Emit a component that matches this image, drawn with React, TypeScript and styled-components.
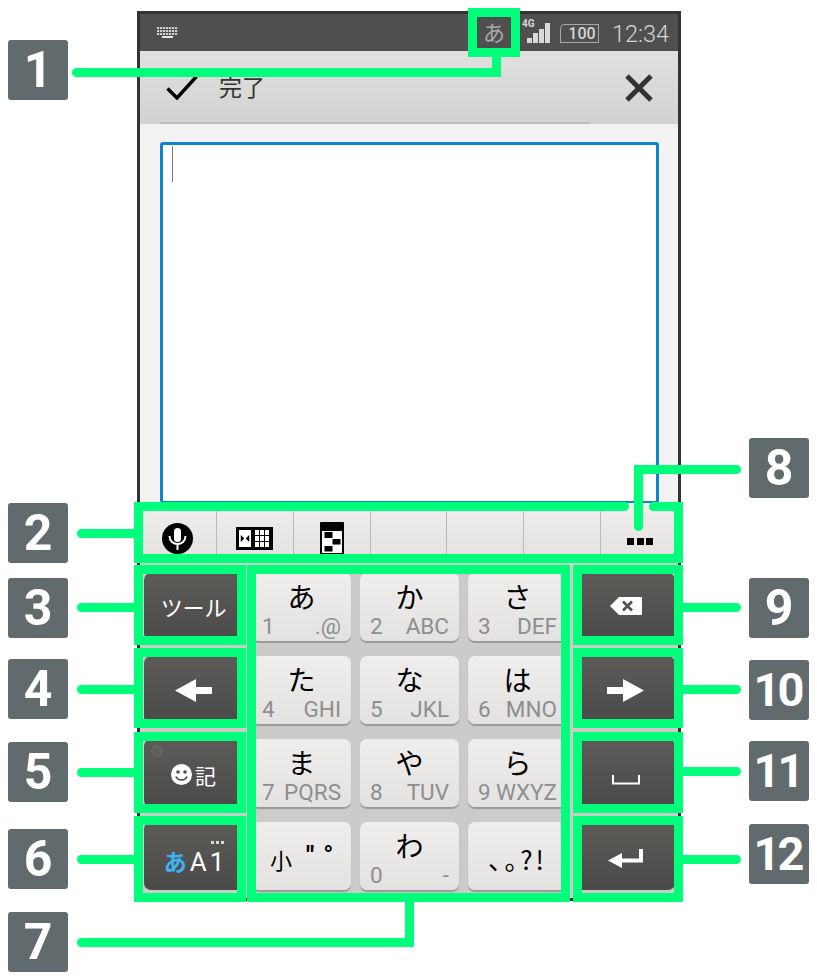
import React from "react";
import styled, { createGlobalStyle } from "styled-components";

const Global = createGlobalStyle`
  html, body { margin: 0; padding: 0; background: #fff; }
  body { font-family: "Roboto", "Noto Sans CJK JP", sans-serif; overflow: hidden; }
`;

const GREEN = "#00ff7b";
const JP = `"Noto Sans CJK JP", "Noto Sans", sans-serif`;

const Page = styled.div`
  position: relative;
  width: 817px;
  height: 980px;
  padding: 11px 0 0 137px;
  box-sizing: border-box;
  background: #fff;
`;
const Phone = styled.div`
  width: 544px;
  height: 890px;
  box-sizing: border-box;
  border: 3px solid #333;
  display: flex;
  flex-direction: column;
  background: #f2f2f2;
`;
const StatusBar = styled.div`
  height: 37px;
  flex: none;
  background: #4f4f4f;
  display: flex;
  align-items: center;
  color: #cfcfcf;
  padding: 0 9px 0 17px;
`;
const ImeGlyph = styled.span`
  margin-left: auto;
  font: 400 22px/37px ${JP};
  color: #a9a9a9;
  margin-right: 16px;
  margin-top: -3px;
`;
const Signal = styled.div`
  position: relative;
  width: 29px;
  height: 37px;
  margin-right: 16px;
  display: flex;
  align-items: flex-end;
`;
const FourG = styled.span`
  position: absolute;
  left: 1px;
  top: 4px;
  font: 700 10px/12px "Roboto", sans-serif;
  color: #d8d8d8;
`;
const Battery = styled.div`
  position: relative;
  width: 33px;
  height: 19px;
  border: 1px solid #a8a8a8;
  border-left: 0;
  box-sizing: border-box;
  font: 500 16px/17px "Roboto", sans-serif;
  color: #d5d5d5;
  text-align: center;
  margin-right: 13px;
  margin-top: 2px;
  &::before {
    content: "";
    position: absolute;
    left: -6px;
    top: -1px;
    width: 7px;
    height: 19px;
    border: 1px solid #a8a8a8;
    border-right: 0;
    border-top-left-radius: 5px;
    box-sizing: border-box;
  }
`;
const Time = styled.span`
  font: 300 23.5px/37px "Roboto", sans-serif;
  color: #d6d6d6;
  margin-top: 3px;
`;
const Header = styled.div`
  position: relative;
  height: 73px;
  flex: none;
  box-sizing: border-box;
  background: linear-gradient(#e1e0de, #d2d2d0);
  display: flex;
  align-items: center;
  padding: 0 25px 0 26px;
  &::after {
    content: "";
    position: absolute;
    left: 20px;
    width: 430px;
    bottom: 0;
    height: 2px;
    background: #bdbdbb;
  }
`;
const HeaderLabel = styled.span`
  margin-left: 21px;
  font: 400 23px/30px ${JP};
  color: #333;
  margin-top: -3px;
`;
const CloseIcon = styled.svg`
  margin-left: auto;
`;
const Content = styled.div`
  flex: 1;
  min-height: 0;
  padding: 18px 19px 0 20px;
  display: flex;
`;
const TextArea = styled.div`
  flex: 1;
  background: #fff;
  border: 3px solid #0c86c7;
  border-bottom-width: 2px;
  border-radius: 3px;
`;
const Caret = styled.div`
  width: 1px;
  height: 36px;
  background: #777;
  margin: 1px 0 0 9px;
`;
const CandidateBar = styled.div`
  height: 55px;
  flex: none;
  display: grid;
  grid-template-columns: repeat(7, 1fr);
  background: linear-gradient(#f0efee, #e3e2e1);
`;
const CandidateCell = styled.div`
  border-right: 1px solid #b9b9b7;
  display: flex;
  align-items: center;
  justify-content: center;
  padding-top: 16px;
  box-sizing: border-box;
  &:last-child { border-right: 0; }
`;
const Dots = styled.div`
  display: flex;
  gap: 2.5px;
  margin-left: 1px;
  margin-top: 5px;
`;
const Dot = styled.i`
  width: 7px;
  height: 7px;
  background: #000;
`;
const Keyboard = styled.div`
  flex: none;
  height: 340px;
  background: #cbcbca;
  display: grid;
  grid-template-columns: repeat(5, 99px);
  grid-auto-rows: 68px;
  column-gap: 9px;
  row-gap: 15px;
  padding: 15px 0 0 4px;
  box-sizing: border-box;
`;
const Key = styled.div`
  position: relative;
  border-radius: 7px;
  background: linear-gradient(#efeeed, #e3e2e1);
  box-shadow: 0 2px 1px #9a9a99;
  padding: 7px 10px 0;
  box-sizing: border-box;
  display: flex;
  flex-direction: column;
  color: #000;
`;
const Kana = styled.div`
  font: 400 28px/32px ${JP};
  text-align: center;
`;
const SubRow = styled.div`
  display: flex;
  justify-content: space-between;
  font: 400 22.5px/24px "Roboto", sans-serif;
  color: #8e8e8e;
  margin-top: 2px;
`;
const SmallKana = styled.div`
  display: flex;
  align-items: center;
  height: 60px;
  padding-left: 8px;
  font: 400 22px/24px ${JP};
  gap: 14px;
`;
const Marks = styled.span`
  font: 700 26px/24px "Roboto", sans-serif;
  letter-spacing: 9px;
  margin-top: -8px;
`;
const Punct = styled.div`
  height: 60px;
  display: flex;
  align-items: center;
  justify-content: center;
  font: 400 26px/30px ${JP};
  font-feature-settings: "palt";
  letter-spacing: 3px;
`;
const SideKey = styled.div`
  position: relative;
  border-radius: 7px;
  background: linear-gradient(#5d5b58, #4a4a49);
  color: #fff;
  display: flex;
  align-items: center;
  justify-content: center;
  padding-top: 1px;
  box-sizing: border-box;
`;
const ToolLabel = styled.span`
  font: 400 22px/28px ${JP};
  letter-spacing: -0.2px;
  margin-top: -3px;
`;
const Lamp = styled.i`
  position: absolute;
  left: 7px;
  top: 6px;
  width: 12px;
  height: 12px;
  border-radius: 50%;
  background: #5f5f5e;
  border: 1px solid #6b6b6a;
  box-sizing: border-box;
`;
const EmojiRow = styled.div`
  display: flex;
  align-items: center;
  gap: 3px;
  font: 400 21px/24px ${JP};
  margin-top: 2px;
`;
const ModeRow = styled.div`
  position: relative;
  display: flex;
  align-items: baseline;
  margin-top: 10px;
  margin-left: 4px;
`;
const ModeKana = styled.span`
  font: 700 23px/26px ${JP};
  color: #3db5f2;
`;
const ModeLatin = styled.span`
  font: 400 26px/26px "Roboto", sans-serif;
  letter-spacing: 3px;
  margin-left: 3px;
`;
const ModeDots = styled.div`
  position: absolute;
  right: 3px;
  top: -7px;
  display: flex;
  gap: 2px;
`;
const ModeDot = styled.i`
  width: 3px;
  height: 3px;
  background: #d8d8d8;
`;

const Badge = styled.div<{ $x: number; $y: number }>`
  position: absolute;
  left: ${(p) => p.$x}px;
  top: ${(p) => p.$y}px;
  width: 60px;
  height: 60px;
  background: #616a6c;
  border-radius: 3px;
  color: #fff;
  display: flex;
  align-items: center;
  justify-content: center;
  font: 700 50px/60px "Roboto", sans-serif;
`;
const WideBadge = styled(Badge)`
  font-size: 47px;
  letter-spacing: -3px;
  padding-right: 3px;
  box-sizing: border-box;
`;
const Stroke = styled.div<{ $x: number; $y: number; $w: number; $h: number; $r?: string }>`
  position: absolute;
  left: ${(p) => p.$x}px;
  top: ${(p) => p.$y}px;
  width: ${(p) => p.$w}px;
  height: ${(p) => p.$h}px;
  background: ${GREEN};
  border-radius: ${(p) => p.$r || "0"};
`;
const Frame = styled.div<{ $x: number; $y: number; $w: number; $h: number; $noTop?: boolean }>`
  position: absolute;
  left: ${(p) => p.$x}px;
  top: ${(p) => p.$y}px;
  width: ${(p) => p.$w}px;
  height: ${(p) => p.$h}px;
  box-sizing: border-box;
  border: 9px solid ${GREEN};
  ${(p) => (p.$noTop ? "border-top: 0;" : "")}
`;

const keys: { k: string; n: string; l: string }[][] = [
  [
    { k: "あ", n: "1", l: ".@" },
    { k: "か", n: "2", l: "ABC" },
    { k: "さ", n: "3", l: "DEF" },
  ],
  [
    { k: "た", n: "4", l: "GHI" },
    { k: "な", n: "5", l: "JKL" },
    { k: "は", n: "6", l: "MNO" },
  ],
  [
    { k: "ま", n: "7", l: "PQRS" },
    { k: "や", n: "8", l: "TUV" },
    { k: "ら", n: "9", l: "WXYZ" },
  ],
];

const KanaKey = ({ k, n, l }: { k: string; n: string; l: string }) => (
  <Key>
    <Kana>{k}</Kana>
    <SubRow>
      <span>{n}</span>
      <span>{l}</span>
    </SubRow>
  </Key>
);

const KeyboardGlyph = () => (
  <svg width="21" height="11" viewBox="0 0 21 11" fill="#cfcfcf">
    {[0, 3, 6, 9, 12, 15, 18].map((x) => (
      <g key={x}>
        <rect x={x} y="0" width="2.2" height="2" />
        <rect x={x} y="3" width="2.2" height="2" />
        <rect x={x} y="6" width="2.2" height="2" />
      </g>
    ))}
    <rect x="5" y="9" width="11" height="2" fill="#e8e8e8" />
  </svg>
);

const SignalBars = () => (
  <svg width="23" height="20" viewBox="0 0 23 20" fill="#dadada" style={{ marginLeft: 6, marginBottom: 8 }}>
    <rect x="0" y="15" width="5" height="5" />
    <rect x="6" y="10" width="5" height="10" />
    <rect x="12" y="6" width="5" height="14" />
    <rect x="18" y="0" width="5" height="20" />
  </svg>
);

const MicIcon = () => (
  <svg width="31" height="31" viewBox="0 0 31 31">
    <circle cx="15.5" cy="15.5" r="15.5" fill="#000" />
    <rect x="12" y="5" width="7" height="14" rx="3.5" fill="#fff" />
    <path d="M7.500 13c0 10.500 16 10.500 16 0" fill="none" stroke="#fff" strokeWidth="2" />
    <rect x="14.500" y="21" width="2" height="6" fill="#fff" />
  </svg>
);

const KeypadIcon = () => (
  <svg width="37" height="23" viewBox="0 0 37 23">
    <rect x="0" y="0" width="37" height="23" fill="#000" />
    <rect x="3" y="3" width="12" height="17" fill="#fff" />
    <path d="M8.300 11.500l-3.500-3.500v7zM9.700 11.500l3.500-3.500v7z" fill="#000" />
    {[19, 24, 29].map((x) => (
      <React.Fragment key={x}>
        <rect x={x} y="3" width="4" height="5" fill="#fff" />
        <rect x={x} y="9" width="4" height="5" fill="#fff" />
        <rect x={x} y="15" width="4" height="5" fill="#fff" />
      </React.Fragment>
    ))}
  </svg>
);

const LayoutIcon = () => (
  <svg width="24" height="33" viewBox="0 0 24 33">
    <rect x="0" y="0" width="24" height="33" rx="1" fill="#000" />
    <rect x="2" y="9" width="20" height="22" fill="#fff" />
    <rect x="4.500" y="10" width="8" height="6" fill="#000" />
    <rect x="12.500" y="17" width="8" height="5.500" fill="#000" />
    <rect x="4.500" y="24" width="8" height="5.500" fill="#000" />
  </svg>
);

const LeftArrow = () => (
  <svg width="37" height="23" viewBox="0 0 37 23" fill="#fff">
    <path d="M0 11.5L21 0v8h16v7H21v8z" />
  </svg>
);
const RightArrow = () => (
  <svg width="37" height="23" viewBox="0 0 37 23" fill="#fff">
    <path d="M37 11.5L16 0v8H0v7h16v8z" />
  </svg>
);
const BackspaceIcon = () => (
  <svg width="32" height="18" viewBox="0 0 32 18" style={{ marginTop: -3 }}>
    <path d="M0 9L9 0h23v18H9z" fill="#fff" />
    <path d="M13 4.5l9 9M22 4.5l-9 9" stroke="#4f4f4e" strokeWidth="2.6" />
  </svg>
);
const SpaceIcon = () => (
  <svg width="28" height="10" viewBox="0 0 28 10" fill="none" style={{ marginTop: 13 }}>
    <path d="M1 0v8.500h26V0" stroke="#fff" strokeWidth="2" />
  </svg>
);
const EnterIcon = () => (
  <svg width="35" height="19" viewBox="0 0 35 19" fill="#fff" style={{ marginTop: 4 }}>
    <path d="M0 11.500L14 4v5.500h17V0h4v13.500H14V19z" />
  </svg>
);
const Smiley = () => (
  <svg width="21" height="21" viewBox="0 0 21 21">
    <circle cx="10.500" cy="10.500" r="10.500" fill="#fff" />
    <circle cx="7" cy="8" r="1.800" fill="#4f4f4e" />
    <circle cx="14" cy="8" r="1.800" fill="#4f4f4e" />
    <path d="M5 12.500c2 4.500 9 4.500 11 0" fill="none" stroke="#4f4f4e" strokeWidth="1.800" />
  </svg>
);

export default function App() {
  return (
    <Page>
      <Global />
      <Phone>
        <StatusBar>
          <KeyboardGlyph />
          <ImeGlyph>あ</ImeGlyph>
          <Signal>
            <FourG>4G</FourG>
            <SignalBars />
          </Signal>
          <Battery>100</Battery>
          <Time>12:34</Time>
        </StatusBar>
        <Header>
          <svg width="32" height="25" viewBox="0 0 32 25" fill="none">
            <path d="M1.500 13.500L11 23 30.500 1.500" stroke="#000" strokeWidth="3.400" />
          </svg>
          <HeaderLabel>完了</HeaderLabel>
          <CloseIcon width="28" height="28" viewBox="0 0 28 28" fill="none">
            <path d="M2 2l24 24M26 2L2 26" stroke="#333" strokeWidth="5" />
          </CloseIcon>
        </Header>
        <Content>
          <TextArea>
            <Caret />
          </TextArea>
        </Content>
        <CandidateBar>
          <CandidateCell><MicIcon /></CandidateCell>
          <CandidateCell><KeypadIcon /></CandidateCell>
          <CandidateCell><LayoutIcon /></CandidateCell>
          <CandidateCell />
          <CandidateCell />
          <CandidateCell />
          <CandidateCell>
            <Dots><Dot /><Dot /><Dot /></Dots>
          </CandidateCell>
        </CandidateBar>
        <Keyboard>
          <SideKey><ToolLabel>ツール</ToolLabel></SideKey>
          {keys[0].map((k) => <KanaKey key={k.k} {...k} />)}
          <SideKey><BackspaceIcon /></SideKey>

          <SideKey><LeftArrow /></SideKey>
          {keys[1].map((k) => <KanaKey key={k.k} {...k} />)}
          <SideKey><RightArrow /></SideKey>

          <SideKey>
            <Lamp />
            <EmojiRow><Smiley />記</EmojiRow>
          </SideKey>
          {keys[2].map((k) => <KanaKey key={k.k} {...k} />)}
          <SideKey><SpaceIcon /></SideKey>

          <SideKey>
            <ModeRow>
              <ModeDots><ModeDot /><ModeDot /><ModeDot /></ModeDots>
              <ModeKana>あ</ModeKana>
              <ModeLatin>A1</ModeLatin>
            </ModeRow>
          </SideKey>
          <Key>
            <SmallKana>
              <span>小</span>
              <Marks>"°</Marks>
            </SmallKana>
          </Key>
          <Key>
            <Kana>わ</Kana>
            <SubRow>
              <span>0</span>
              <span>-</span>
            </SubRow>
          </Key>
          <Key>
            <Punct>、。?!</Punct>
          </Key>
          <SideKey><EnterIcon /></SideKey>
        </Keyboard>
      </Phone>

      {/* 1 */}
      <Frame $x={468} $y={8} $w={52} $h={49} />
      <Stroke $x={492} $y={57} $w={9} $h={20} />
      <Stroke $x={72} $y={68} $w={429} $h={9} $r="5px 0 0 5px" />
      {/* 2 + 8 */}
      <Frame $x={134} $y={511} $w={549} $h={52} $noTop />
      <Stroke $x={134} $y={502} $w={495} $h={9} $r="0 5px 5px 0" />
      <Stroke $x={649} $y={502} $w={34} $h={9} $r="5px 0 0 5px" />
      <Stroke $x={77} $y={529} $w={57} $h={9} $r="5px 0 0 5px" />
      <Stroke $x={634} $y={465} $w={9} $h={66} $r="0 0 5px 5px" />
      <Stroke $x={634} $y={465} $w={107} $h={9} $r="0 5px 5px 0" />
      {/* left column */}
      <Frame $x={134} $y={565} $w={112} $h={80} />
      <Frame $x={134} $y={648} $w={112} $h={80} />
      <Frame $x={134} $y={732} $w={112} $h={81} />
      <Frame $x={134} $y={816} $w={112} $h={86} />
      <Stroke $x={77} $y={603} $w={57} $h={9} $r="5px 0 0 5px" />
      <Stroke $x={77} $y={685} $w={57} $h={9} $r="5px 0 0 5px" />
      <Stroke $x={77} $y={768} $w={57} $h={9} $r="5px 0 0 5px" />
      <Stroke $x={77} $y={855} $w={57} $h={9} $r="5px 0 0 5px" />
      {/* main */}
      <Frame $x={247} $y={565} $w={323} $h={337} />
      <Stroke $x={405} $y={902} $w={9} $h={45} />
      <Stroke $x={77} $y={938} $w={337} $h={9} $r="5px 0 0 5px" />
      {/* right column */}
      <Frame $x={573} $y={565} $w={110} $h={80} />
      <Frame $x={573} $y={648} $w={110} $h={80} />
      <Frame $x={573} $y={732} $w={110} $h={81} />
      <Frame $x={573} $y={816} $w={110} $h={86} />
      <Stroke $x={683} $y={603} $w={58} $h={9} $r="0 5px 5px 0" />
      <Stroke $x={683} $y={685} $w={58} $h={9} $r="0 5px 5px 0" />
      <Stroke $x={683} $y={767} $w={58} $h={9} $r="0 5px 5px 0" />
      <Stroke $x={683} $y={855} $w={58} $h={9} $r="0 5px 5px 0" />

      <Badge $x={8} $y={40}>1</Badge>
      <Badge $x={8} $y={503}>2</Badge>
      <Badge $x={8} $y={578}>3</Badge>
      <Badge $x={8} $y={659}>4</Badge>
      <Badge $x={8} $y={742}>5</Badge>
      <Badge $x={8} $y={829}>6</Badge>
      <Badge $x={8} $y={912}>7</Badge>
      <Badge $x={749} $y={438}>8</Badge>
      <Badge $x={749} $y={578}>9</Badge>
      <WideBadge $x={749} $y={660}>10</WideBadge>
      <WideBadge $x={749} $y={741}>11</WideBadge>
      <WideBadge $x={749} $y={824}>12</WideBadge>
    </Page>
  );
}
